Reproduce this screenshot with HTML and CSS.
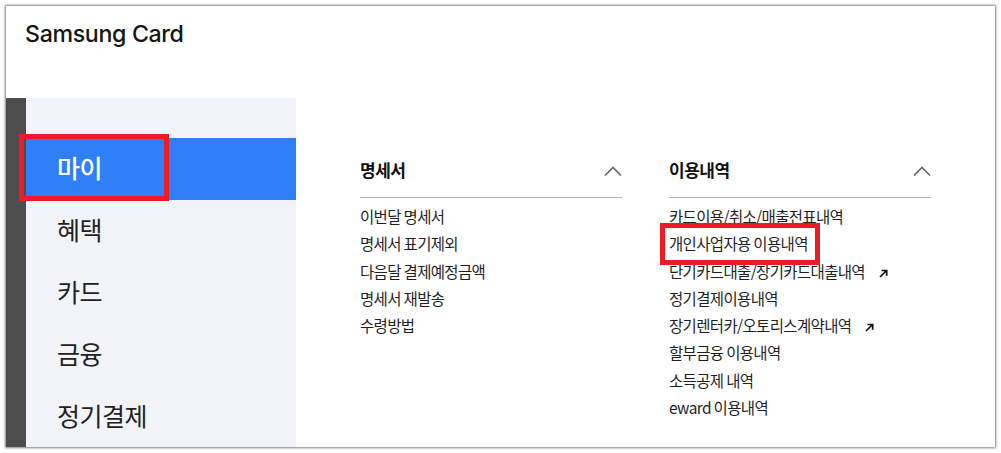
FILE: index.html
```html
<!DOCTYPE html>
<html lang="ko">
<head>
<meta charset="utf-8">
<title>Samsung Card</title>
<link rel="stylesheet" href="styles.css">
</head>
<body>
<div class="frame">
  <header class="top"><span class="logo">Samsung Card</span></header>
  <div class="body">
    <nav class="side">
      <a class="nav-item active">마이</a>
      <a class="nav-item">혜택</a>
      <a class="nav-item">카드</a>
      <a class="nav-item">금융</a>
      <a class="nav-item">정기결제</a>
    </nav>
    <main class="content">
      <section class="col">
        <div class="col-head"><h2>명세서</h2>
          <svg class="chev" width="18" height="10" viewBox="0 0 18 10"><path d="M1 9.5L9 1.5L17 9.5" fill="none" stroke="#666" stroke-width="1.6"/></svg>
        </div>
        <ul class="list">
          <li>이번달 명세서</li>
          <li>명세서 표기제외</li>
          <li>다음달 결제예정금액</li>
          <li>명세서 재발송</li>
          <li>수령방법</li>
        </ul>
      </section>
      <section class="col">
        <div class="col-head"><h2>이용내역</h2>
          <svg class="chev" width="18" height="10" viewBox="0 0 18 10"><path d="M1 9.5L9 1.5L17 9.5" fill="none" stroke="#666" stroke-width="1.6"/></svg>
        </div>
        <ul class="list">
          <li>카드이용/취소/매출전표내역</li>
          <li>개인사업자용 이용내역</li>
          <li class="ext"><span>단기카드대출/장기카드대출내역</span><svg width="9" height="9" viewBox="0 0 9 9"><path d="M1 8L7.5 1.5M2.5 1.5H7.7V6.7" fill="none" stroke="#111" stroke-width="1.7"/></svg></li>
          <li>정기결제이용내역</li>
          <li class="ext"><span>장기렌터카/오토리스계약내역</span><svg width="9" height="9" viewBox="0 0 9 9"><path d="M1 8L7.5 1.5M2.5 1.5H7.7V6.7" fill="none" stroke="#111" stroke-width="1.7"/></svg></li>
          <li>할부금융 이용내역</li>
          <li>소득공제 내역</li>
          <li>eward 이용내역</li>
        </ul>
      </section>
    </main>
  </div>
  <div class="mark mark-nav"></div>
  <div class="mark mark-item"></div>
</div>
</body>
</html>
```

FILE: styles.css
```css
* { box-sizing: border-box; }
html, body { margin: 0; padding: 0; height: 100%; background: #fff; overflow: hidden; }
body { font-family: "Noto Sans CJK KR", "Noto Sans", sans-serif; color: #1a1a1a; }
.frame {
  position: relative;
  width: 989px;
  height: 441px;
  margin: 6px 0 0 6px;
  background: #fff;
  box-shadow: 0 0 2px 1px rgba(60, 60, 60, .65);
  display: flex;
  flex-direction: column;
}
.top { height: 92px; padding: 13px 0 0 19px; flex: none; }
.logo { font-family: Inter, "Noto Sans", sans-serif; font-size: 23.2px; line-height: 30px; font-weight: 550; letter-spacing: -.35px; color: #151515; display: block; }
.body { flex: 1; display: flex; min-height: 0; border-left: 20px solid #4d4d4d; }
.side { width: 270px; flex: none; background: #f3f4f9; padding-top: 40px; display: flex; flex-direction: column; overflow: hidden; }
.nav-item { height: 62px; flex: none; display: flex; align-items: center; padding: 0 0 4px 31px; font-size: 25px; letter-spacing: -.5px; color: #222; }
.nav-item.active { background: #2f80f7; color: #fff; font-weight: 500; }
.content { flex: 1; display: flex; gap: 47px; padding: 56px 0 0 64px; }
.col { width: 262px; flex: none; }
.col-head { height: 44px; border-bottom: 1px solid #b3b3b3; display: flex; align-items: flex-start; justify-content: space-between; }
.col-head h2 { margin: 2px 0 0; font-size: 17px; line-height: 28px; font-weight: 700; letter-spacing: -.5px; color: #111; }
.chev { margin: 12px 0 0 0; }
.list { list-style: none; margin: 5px 0 0; padding: 0; }
.list li { height: 27.3px; line-height: 27px; font-size: 15.5px; letter-spacing: -.65px; word-spacing: -1px; color: #1f1f1f; white-space: nowrap; }
.ext svg { margin-left: 14px; }
.mark { position: absolute; border: 5px solid #ed1c24; pointer-events: none; }
.mark-nav { left: 13px; top: 128px; width: 150px; height: 67px; }
.mark-item { left: 654px; top: 217px; width: 160px; height: 42px; }
```
